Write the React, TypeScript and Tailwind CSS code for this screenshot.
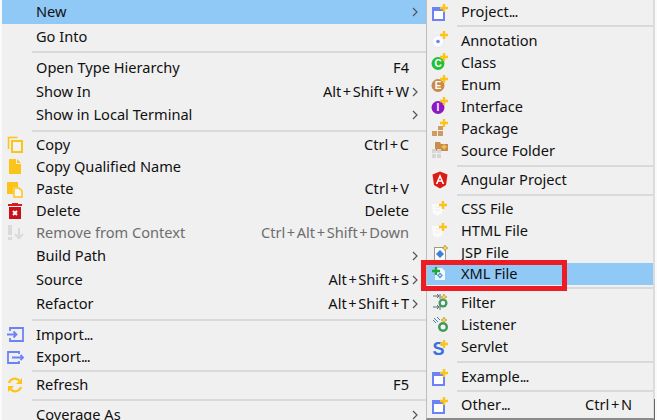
import React from 'react'

const Plus = ({ x = 14, y = 4, c = '#fcc419' }: { x?: number; y?: number; c?: string }) => (
  <path d={`M${x - 4} ${y}H${x + 4}M${x} ${y - 4}V${y + 4}`} stroke={c} strokeWidth="2.400" fill="none" />
)

const Wizard = () => (
  <svg width="20" height="20" viewBox="0 0 20 20">
    <rect x="3" y="6" width="11" height="12" fill="#fff" stroke="#6d83f5" strokeWidth="2" />
    <rect x="2" y="5" width="13" height="4" fill="#6d83f5" />
    <Plus x={14} y={6} />
  </svg>
)

const Badge = ({ color, letter }: { color: string; letter: string }) => (
  <svg width="20" height="20" viewBox="0 0 20 20">
    <circle cx="8" cy="10.500" r="6.500" fill={color} />
    <text x="8" y="14" textAnchor="middle" fontSize="10" fontWeight="700" fill="#fff" fontFamily="Liberation Sans, sans-serif">{letter}</text>
    <Plus x={14} y={4} />
  </svg>
)

const Shield = () => (
  <svg width="20" height="20" viewBox="0 0 20 20">
    <path d="M2 5h11l-1 9.500-4.500 2-4.500-2z" fill="#fbfbfb" />
    <path d="M5 8h5M5 11h5" stroke="#ececec" strokeWidth="1" />
    <Plus x={13} y={6} />
  </svg>
)

const Star = ({ x, y }: { x: number; y: number }) => (
  <path d={`M${x} ${y - 3}l1 2 2 1-2 1-1 2-1-2-2-1 2-1z`} fill="#fcd34d" stroke="#a98a2d" strokeWidth="0.600" />
)

const icons: Record<string, React.ReactNode> = {
  wizard: <Wizard />,
  annotation: (
    <svg width="20" height="20" viewBox="0 0 20 20">
      <circle cx="8" cy="10.500" r="6" fill="#fbfbfb" stroke="#e6e8fb" />
      <circle cx="8" cy="10.500" r="1.800" fill="#6d83f5" />
      <Plus x={14} y={4} />
    </svg>
  ),
  class: <Badge color="#22c13a" letter="C" />,
  enum: <Badge color="#c88a4a" letter="E" />,
  interface: <Badge color="#8c18c4" letter="I" />,
  package: (
    <svg width="20" height="20" viewBox="0 0 20 20">
      <path d="M2 12h5v5H2zM8 12h5v5H8zM8 7h5v4H8z" fill="#d09a62" />
      <Plus x={14} y={4} />
    </svg>
  ),
  folder: (
    <svg width="20" height="20" viewBox="0 0 20 20">
      <path d="M5 1h5l1 2h7v7H5z" fill="#c98d4e" />
      <path d="M2 8h4v4H2zM7 8h4v4H7zM2 13h4v4H2zM7 13h4v4H7z" fill="#d5d5d5" />
      <path d="M13.500 3.500h1.200v1.800h1.800v1.200h-1.800v1.800h-1.200V6.500h-1.800V5.300h1.800z" fill="#fcd34d" />
    </svg>
  ),
  angular: (
    <svg width="20" height="20" viewBox="0 0 20 20">
      <path d="M10 1.500 2.500 4.500 4 15l6 3.500L16 15l1.500-10.500z" fill="#dd1b16" />
      <path d="M10 4 5.800 14h1.700l.9-2.300h3.200l.9 2.300h1.700zM9 10.300 10 7.800l1 2.500z" fill="#fff" />
    </svg>
  ),
  css: <Shield />,
  jsp: (
    <svg width="20" height="20" viewBox="0 0 20 20">
      <rect x="4.500" y="4.500" width="11" height="13" fill="#fafafa" stroke="#9a9a8c" />
      <path d="M10 7l4 4-4 4-4-4z" fill="#3b82d6" />
      <Star x={15} y={5} />
    </svg>
  ),
  xml: (
    <svg width="20" height="20" viewBox="0 0 20 20">
      <path d="M5 4h7l3 3v9H5z" fill="#f4f9fd" />
      <path d="M8 11.500l2-2 2 2-2 2z" fill="none" stroke="#4f9bd9" strokeWidth="1.300" />
      <Plus x={6} y={7} c="#1fa83c" />
    </svg>
  ),
  filter: (
    <svg width="20" height="20" viewBox="0 0 20 20">
      <path d="M3 3h6M7 1l2 2-2 2M3 14h6M7 12l2 2-2 2M10 1v5M10 12v5" stroke="#5b6b6b" strokeWidth="1" fill="none" />
      <circle cx="13" cy="10" r="4.500" fill="#3e9a58" />
      <circle cx="13" cy="10" r="2.200" fill="#f4f4f4" />
      <Star x={14} y={4} />
    </svg>
  ),
  listener: (
    <svg width="20" height="20" viewBox="0 0 20 20">
      <path d="M3 5l3 3M4 3l4 4M7 2l3 3" stroke="#4b7fa8" strokeWidth="1" fill="none" />
      <circle cx="13" cy="12" r="5" fill="#3e9a58" />
      <circle cx="13" cy="12" r="2.500" fill="#f4f4f4" />
      <Star x={14} y={5} />
    </svg>
  ),
  servlet: (
    <svg width="20" height="24" viewBox="0 -2 20 24">
      <text x="8.500" y="18" textAnchor="middle" fontSize="18" fontWeight="700" fill="#3c6fe0" fontFamily="Liberation Sans, sans-serif">S</text>
      <Plus x={14} y={7} />
    </svg>
  ),
  copy: (
    <svg width="20" height="20" viewBox="0 0 20 20">
      <path d="M3.500 14V2.500h9" fill="none" stroke="#fcc419" strokeWidth="1.500" />
      <rect x="7" y="6" width="10" height="11" fill="#f3f3f3" stroke="#fcc419" strokeWidth="2" />
    </svg>
  ),
  qualified: (
    <svg width="20" height="20" viewBox="0 0 20 20">
      <path d="M4 2h7v5h5v10H4zM12 2l4 4h-4z" fill="#fcc419" />
    </svg>
  ),
  paste: (
    <svg width="20" height="20" viewBox="0 0 20 20">
      <path d="M2 3h11v5H8v7H2z" fill="#fcc419" />
      <path d="M9 9h5l3 3v6H9z" fill="#f6f6f6" stroke="#fcc419" strokeWidth="1.500" />
    </svg>
  ),
  delete: (
    <svg width="20" height="20" viewBox="0 0 20 20">
      <path d="M3 3h14v2H3zM7 2h6v1H7z" fill="#d71920" />
      <path d="M4 6h12v12H4z" fill="#c8101a" />
      <path d="M8 10l4 4M12 10l-4 4" stroke="#fff" strokeWidth="2" />
    </svg>
  ),
  remove: (
    <svg width="20" height="20" viewBox="0 0 20 20">
      <path d="M3 2h4v10H3zM3 14h4v3H3z" fill="#dadada" />
      <path d="M14 5v10M10 11l4 4 4-4" stroke="#dadada" strokeWidth="2" fill="none" />
    </svg>
  ),
  import: (
    <svg width="20" height="20" viewBox="0 0 20 20">
      <path d="M5 6V3h13v13H5v-3" fill="none" stroke="#6d83f5" strokeWidth="1.800" />
      <path d="M2 9.500h9M8.500 6.500l3 3-3 3" fill="none" stroke="#6d83f5" strokeWidth="1.800" />
    </svg>
  ),
  export: (
    <svg width="20" height="20" viewBox="0 0 20 20">
      <path d="M14 7V5H3v11h11v-2" fill="none" stroke="#6d83f5" strokeWidth="1.800" />
      <path d="M7 10.500h11M15.500 8l2.500 2.500-2.500 2.500" fill="none" stroke="#6d83f5" strokeWidth="1.800" />
    </svg>
  ),
  refresh: (
    <svg width="20" height="20" viewBox="0 0 20 20">
      <path d="M4 8a6 6 0 0 1 10.500-2M16 12a6 6 0 0 1-10.500 2" fill="none" stroke="#fcc419" strokeWidth="2.200" />
      <path d="M17 3v6h-6zM3 17v-6h6z" fill="#fcc419" />
    </svg>
  ),
}

type Item = {
  label?: string
  h?: number
  icon?: string
  shortcut?: string
  arrow?: boolean
  disabled?: boolean
  active?: boolean
  sep?: string
}

const leftItems: Item[] = [
  { label: 'New', h: 24, arrow: true, active: true },
  { label: 'Go Into', h: 26 },
  { sep: 'mt-[1px] mb-[3px]' },
  { label: 'Open Type Hierarchy', h: 24, shortcut: 'F4' },
  { label: 'Show In', h: 23, shortcut: 'Alt+Shift+W', arrow: true },
  { label: 'Show in Local Terminal', h: 24, arrow: true },
  { sep: 'mt-[3px] mb-[2px]' },
  { label: 'Copy', h: 22, icon: 'copy', shortcut: 'Ctrl+C' },
  { label: 'Copy Qualified Name', h: 22, icon: 'qualified' },
  { label: 'Paste', h: 22, icon: 'paste', shortcut: 'Ctrl+V' },
  { label: 'Delete', h: 22, icon: 'delete', shortcut: 'Delete' },
  { label: 'Remove from Context', h: 22, icon: 'remove', shortcut: 'Ctrl+Alt+Shift+Down', disabled: true },
  { label: 'Build Path', h: 24, arrow: true },
  { label: 'Source', h: 24, shortcut: 'Alt+Shift+S', arrow: true },
  { label: 'Refactor', h: 24, shortcut: 'Alt+Shift+T', arrow: true },
  { sep: 'mt-[3px] mb-[3px]' },
  { label: 'Import...', h: 22, icon: 'import' },
  { label: 'Export...', h: 22, icon: 'export' },
  { sep: 'mt-[2px] mb-[2px]' },
  { label: 'Refresh', h: 22, icon: 'refresh', shortcut: 'F5' },
  { sep: 'mt-[3px] mb-[2px]' },
  { label: 'Coverage As', h: 24, arrow: true },
]

const rightItems: Item[] = [
  { label: 'Project...', h: 24, icon: 'wizard' },
  { sep: 'mt-[1px] mb-[3px]' },
  { label: 'Annotation', h: 22, icon: 'annotation' },
  { label: 'Class', h: 22, icon: 'class' },
  { label: 'Enum', h: 22, icon: 'enum' },
  { label: 'Interface', h: 22, icon: 'interface' },
  { label: 'Package', h: 22, icon: 'package' },
  { label: 'Source Folder', h: 22, icon: 'folder' },
  { sep: 'mt-[3px] mb-[2px]' },
  { label: 'Angular Project', h: 22, icon: 'angular' },
  { sep: 'mt-[3px] mb-[2px]' },
  { label: 'CSS File', h: 22, icon: 'css' },
  { label: 'HTML File', h: 22, icon: 'css' },
  { label: 'JSP File', h: 21, icon: 'jsp' },
  { label: 'XML File', h: 22, icon: 'xml', active: true },
  { sep: 'mt-[2px] mb-[3px]' },
  { label: 'Filter', h: 22, icon: 'filter' },
  { label: 'Listener', h: 22, icon: 'listener' },
  { label: 'Servlet', h: 22, icon: 'servlet' },
  { sep: 'mt-[3px] mb-[3px]' },
  { label: 'Example...', h: 22, icon: 'wizard' },
  { sep: 'mt-[2px] mb-[2px]' },
  { label: 'Other...', h: 22, icon: 'wizard', shortcut: 'Ctrl+N' },
]

// the dots in the reference sit much closer together than in Noto Sans
const Label = ({ text }: { text?: string }) => {
  if (text && text.endsWith('...')) {
    return (
      <span className="whitespace-nowrap">
        {text.slice(0, -3)}
        <span className="tracking-[-1px]">...</span>
      </span>
    )
  }
  return <span className="whitespace-nowrap">{text}</span>
}

// only the plus signs are wider in the reference, the words are not
const Shortcut = ({ text, pad }: { text?: string; pad: string }) => (
  <span className={`ml-auto whitespace-nowrap ${pad}`}>
    {text?.split('+').map((part, i) => (
      <React.Fragment key={i}>
        {i > 0 && <span className="px-[1.600px]">+</span>}
        {part}
      </React.Fragment>
    ))}
  </span>
)

const Row = ({ item, pad }: { item: Item; pad: string }) => {
  return (
    <div
      className={`flex shrink-0 items-center ${item.active ? 'bg-[#90c8f6]' : ''} ${item.disabled ? 'text-[#6d6d6d]' : 'text-[#111111]'}`}
      style={{ height: item.h }}
    >
      <div className="flex w-[34px] shrink-0 items-center pl-[3px]">{item.icon ? icons[item.icon] : null}</div>
      <Label text={item.label} />
      <Shortcut text={item.shortcut} pad={pad} />
      <div className="flex w-[17px] shrink-0 items-center pl-[3px]">
        {item.arrow && (
          <svg width="7" height="10" viewBox="0 0 7 10">
            <path d="M1 1l4 4-4 4" fill="none" stroke="#555555" strokeWidth="1.200" />
          </svg>
        )}
      </div>
    </div>
  )
}

const Separator = ({ cls }: { cls: string }) => <div className={`ml-[30px] h-[2px] shrink-0 bg-[#d9d9d9] ${cls}`} />

export default function App() {
  return (
    <div className="relative h-[420px] w-[657px] overflow-hidden bg-[#fafafa] pl-[2px] font-['Noto_Sans','Open_Sans',sans-serif] text-[14.600px]">
      <div className="flex h-[420px] w-[653px] bg-[#f0f0f0]">
        <div className="flex w-[424px] shrink-0 flex-col">
          {leftItems.map((item, i) =>
            item.sep ? <Separator key={i} cls={item.sep} /> : <Row key={i} item={item} pad="" />,
          )}
        </div>
        <div className="flex h-[420px] w-[229px] shrink-0 flex-col border-r-2 border-b-2 border-l border-r-[#dcdcdc] border-b-[#8a8a8a] border-l-[#bdbdbd] bg-[#f0f0f0]">
          {rightItems.map((item, i) =>
            item.sep ? <Separator key={i} cls={item.sep} /> : <Row key={i} item={item} pad="mr-[4px]" />,
          )}
        </div>
      </div>
      <div className="absolute top-[260px] left-[421px] h-[31px] w-[146px] border-[5px] border-[#ed1c24]" />
      <div className="absolute top-[399px] left-[654px] h-[21px] w-[1px] bg-[#666666]" />
    </div>
  )
}
